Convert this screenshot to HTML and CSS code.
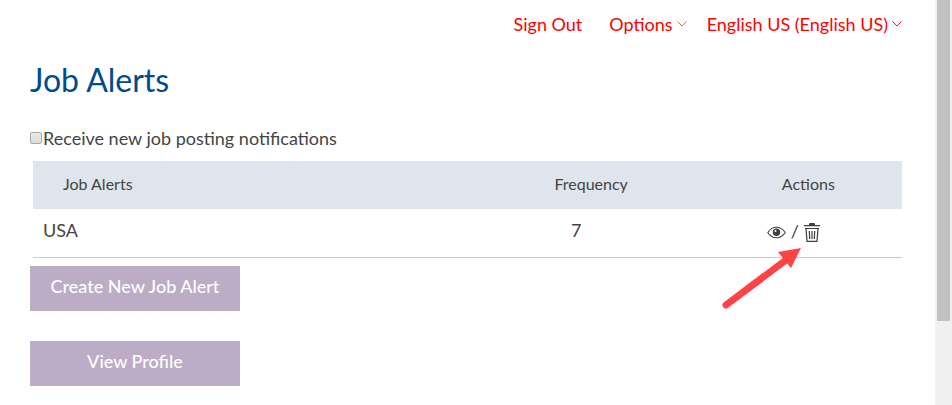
FILE: index.html
```html
<!DOCTYPE html>
<html lang="en">
<head>
    <meta charset="UTF-8">
    <meta name="viewport" content="width=device-width, initial-scale=1.0">
    <title>Job Alerts</title>
    <link rel="stylesheet" href="styles.css">
</head>
<body>

    <div class="page">
        <nav class="top-nav">
            <a href="#" class="sign-out">Sign Out</a>
            <a href="#">Options
                <svg class="chevron options" width="10" height="6" viewBox="0 0 10 6"><path d="M.5 .5 5 5 9.500 .5"/></svg>
            </a>
            <a href="#">English US (English US)
                <svg class="chevron language" width="10" height="6" viewBox="0 0 10 6"><path d="M.5 .5 5 5 9.500 .5"/></svg>
            </a>
        </nav>

        <main>
            <h1>Job Alerts</h1>

            <div class="notify">
                <input type="checkbox" id="notify" name="notify">
                <label for="notify">Receive new job posting notifications</label>
            </div>

            <div class="table-wrap">
                <table>
                    <thead>
                        <tr>
                            <th class="name">Job Alerts</th>
                            <th>Frequency</th>
                            <th>Actions</th>
                        </tr>
                    </thead>
                    <tbody>
                        <tr>
                            <td class="name">USA</td>
                            <td>7</td>
                            <td class="action-cell">
                                <div class="actions">
                                    <button type="button" class="icon-btn" aria-label="View">
                                        <svg width="19" height="13" viewBox="0 0 19 13">
                                            <path d="M.8 6.500C3 3 6 1.200 9.500 1.200S16 3 18.200 6.500C16 10 13 11.800 9.500 11.800S3 10 .8 6.500Z" fill="none" stroke="#3f3f3f" stroke-width="1.100"/>
                                            <circle cx="9.500" cy="6.200" r="3.700" fill="#3f3f3f"/>
                                            <circle cx="8.500" cy="5" r="1" fill="#fff"/>
                                        </svg>
                                    </button>
                                    <span class="divider">/</span>
                                    <button type="button" class="icon-btn" aria-label="Delete">
                                        <svg width="16" height="19" viewBox="0 0 16 19">
                                            <path d="M5 2V1Q5 0 6 0h4q1 0 1 1v1h5v1.300H0V2Z" fill="#3f3f3f"/>
                                            <path d="M1 5.500h14M2 5.500 3 18.300h10L14 5.500M5.300 8l.4 8M8 8v8M10.700 8l-.4 8" fill="none" stroke="#3f3f3f" stroke-width="1.200"/>
                                        </svg>
                                    </button>
                                    <svg class="arrow" width="80" height="62" viewBox="0 0 80 62">
                                        <path d="M4 58 64 13" stroke="#fd4345" stroke-width="7" stroke-linecap="round"/>
                                        <path d="M79 1 56 5 69 21Z" fill="#fd4345"/>
                                    </svg>
                                </div>
                            </td>
                        </tr>
                    </tbody>
                </table>
            </div>

            <div class="buttons">
                <button type="button" class="btn">Create New Job Alert</button>
                <button type="button" class="btn">View Profile</button>
            </div>
        </main>
    </div>

    <div class="scrollbar"><div class="thumb"></div></div>

</body>
</html>
```
FILE: styles.css
```css
* {
    box-sizing: border-box;
}

body {
    margin: 0;
    display: flex;
    min-height: 100vh;
    background: #fff;
    color: #444;
    font-family: Lato, sans-serif;
    font-size: 18px;
    line-height: 24px;
}

.page {
    flex: 1;
    padding: 12px 33px 0 30px;
}

.top-nav {
    display: flex;
    justify-content: flex-end;
    gap: 20px;
}

.top-nav a {
    display: flex;
    align-items: center;
    gap: 4px;
    color: #f00;
    text-decoration: none;
}

.top-nav .sign-out {
    margin-right: 7px;
}

.chevron {
    fill: none;
}

.options {
    stroke: #c87840;
}

.language {
    stroke: #e0108a;
}

h1 {
    margin: 24px 0 26px;
    color: #004b8d;
    font-size: 32px;
    font-weight: 400;
    line-height: 40px;
}

.notify {
    display: flex;
    align-items: center;
}

.notify input {
    appearance: none;
    width: 12px;
    height: 12px;
    margin: 0 1px 0 0;
    border: 1px solid #a9a9a9;
    border-radius: 2px;
    background: linear-gradient(#e8e8e8, #dcdcdc);
}

.table-wrap {
    margin-top: 11px;
    padding-left: 3px;
}

table {
    width: 100%;
    table-layout: fixed;
    border-collapse: collapse;
}

th {
    width: 25%;
    height: 48px;
    padding: 0 0 2px 30px;
    background: #dee5ec;
    font-size: 16px;
    font-weight: 400;
}

td {
    height: 48px;
    padding: 0 0 5px;
    border-bottom: 1px solid #ccc;
    text-align: center;
}

.name {
    width: 50%;
    text-align: left;
}

td.name {
    padding-left: 10px;
}

.action-cell {
    padding: 0 0 2px;
}

.actions {
    position: relative;
    display: inline-flex;
    align-items: center;
    gap: 5px;
    vertical-align: middle;
}

.divider {
    padding-bottom: 2px;
}

.icon-btn {
    display: flex;
    padding: 0;
    border: 0;
    background: none;
    cursor: pointer;
}

/* points at the delete button */
.arrow {
    position: absolute;
    top: 28px;
    right: 18px;
    pointer-events: none;
}

.buttons {
    display: flex;
    flex-direction: column;
    align-items: flex-start;
    gap: 30px;
    margin-top: 8px;
}

.btn {
    width: 210px;
    height: 45px;
    padding: 0 0 5px;
    border: 0;
    background: #bcacc6;
    color: #fff;
    font-family: inherit;
    font-size: 18px;
    font-weight: 500;
    cursor: pointer;
}

.scrollbar {
    width: 17px;
    padding: 0 2px;
    background: #f0f0f0;
}

.thumb {
    height: 321px;
    background: #c1c1c1;
}
```
